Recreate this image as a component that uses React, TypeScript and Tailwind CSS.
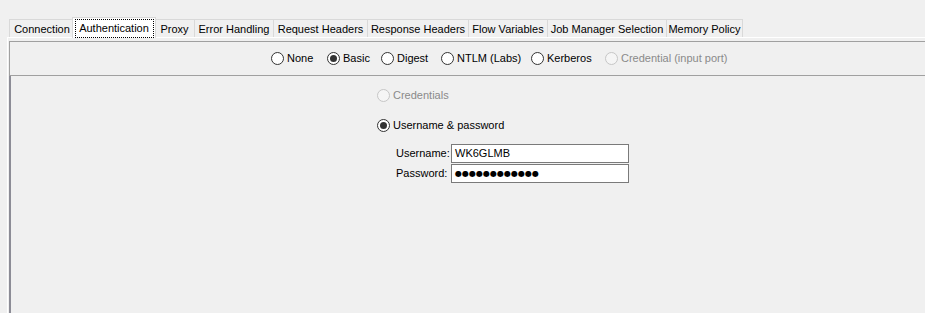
import React from "react";

function Radio({ checked = false, disabled = false }: { checked?: boolean; disabled?: boolean }) {
  return (
    <span
      className={
        disabled
          ? "w-[13px] h-[13px] shrink-0 rounded-full border border-[#c6c6c6] bg-[#f5f5f5] flex items-center justify-center"
          : "w-[13px] h-[13px] shrink-0 rounded-full border border-[#333333] bg-white flex items-center justify-center"
      }
    >
      {checked && <span className="w-[7px] h-[7px] rounded-full bg-[#333333]" />}
    </span>
  );
}

function RadioItem({
  label,
  checked,
  disabled,
  width,
}: {
  label: string;
  checked?: boolean;
  disabled?: boolean;
  width: string;
}) {
  return (
    <div className={`flex items-center gap-[3px] shrink-0 ${width}`}>
      <Radio checked={checked} disabled={disabled} />
      <span className={disabled ? "text-[#8a8a8a] whitespace-nowrap" : "text-black whitespace-nowrap"}>{label}</span>
    </div>
  );
}

const tabs: { label: string; w: string; selected?: boolean; last?: boolean }[] = [
  { label: "Connection", w: "w-[65px]" },
  { label: "Authentication", w: "w-[84px]", selected: true },
  { label: "Proxy", w: "w-[40px]" },
  { label: "Error Handling", w: "w-[79px]" },
  { label: "Request Headers", w: "w-[94px]" },
  { label: "Response Headers", w: "w-[101px]" },
  { label: "Flow Variables", w: "w-[79px]" },
  { label: "Job Manager Selection", w: "w-[119px]" },
  { label: "Memory Policy", w: "w-[77px]", last: true },
];

export default function App() {
  return (
    <div
      className="w-[925px] h-[313px] overflow-hidden bg-[#f0f0f0] text-[11px] text-black leading-none"
      style={{ fontFamily: '"Liberation Sans", Arial, sans-serif' }}
    >
      {/* Tab strip */}
      <div className="flex items-end h-[37px] pl-[9px]">
        {tabs.map((t) =>
          t.selected ? (
            <div
              key={t.label}
              className={`${t.w} h-[21px] -mb-[1px] -ml-[2px] -mr-[2px] relative z-10 bg-white border-t border-l border-r border-[#d9d9d9] flex items-start justify-center pt-[1px]`}
            >
              <div className="w-[79px] h-[19px] border border-dotted border-black flex items-center justify-center whitespace-nowrap">
                {t.label}
              </div>
            </div>
          ) : (
            <div
              key={t.label}
              className={`${t.w} h-[18px] border-t border-l ${t.last ? "border-r" : ""} border-[#d9d9d9] bg-[#f0f0f0] flex items-center justify-center whitespace-nowrap pt-[1px]`}
            >
              {t.label}
            </div>
          )
        )}
      </div>

      {/* Content panel */}
      <div className="ml-[7px] h-[276px] border-t border-l border-white pt-[3px] pl-[1px] w-[1000px]">
        {/* Upper box: auth type radios */}
        <div className="h-[35px] border border-[#a0a0a0] flex items-center pl-[261px]">
          <RadioItem label="None" width="w-[56px]" />
          <RadioItem label="Basic" checked width="w-[54px]" />
          <RadioItem label="Digest" width="w-[60px]" />
          <RadioItem label="NTLM (Labs)" width="w-[90px]" />
          <RadioItem label="Kerberos" width="w-[74px]" />
          <RadioItem label="Credential (input port)" disabled width="w-[140px]" />
        </div>

        {/* Lower box */}
        <div className="h-[240px] border-l-2 border-[#8c8c96] pt-[13px] pl-[366px]">
          <div className="h-[13px] flex items-center">
            <RadioItem label="Credentials" disabled width="w-[120px]" />
          </div>
          <div className="h-[13px] mt-[17px] flex items-center">
            <RadioItem label="Username & password" checked width="w-[140px]" />
          </div>
          <div className="mt-[12px] pl-[19px] grid grid-cols-[55px_178px] gap-y-[1px] items-center">
            <span>Username:</span>
            <div className="h-[19px] border border-[#7a7a7a] bg-white flex items-center pl-[3px]">WK6GLMB</div>
            <span>Password:</span>
            <div className="h-[19px] border border-[#7a7a7a] bg-white flex items-center pl-[3px]">
              {Array.from({ length: 12 }).map((_, i) => (
                <span
                  key={i}
                  className="inline-block w-[7px] text-center text-[8px] leading-none"
                  style={{ fontFamily: '"DejaVu Sans", sans-serif' }}
                >
                  ●
                </span>
              ))}
            </div>
          </div>
        </div>
      </div>
    </div>
  );
}
